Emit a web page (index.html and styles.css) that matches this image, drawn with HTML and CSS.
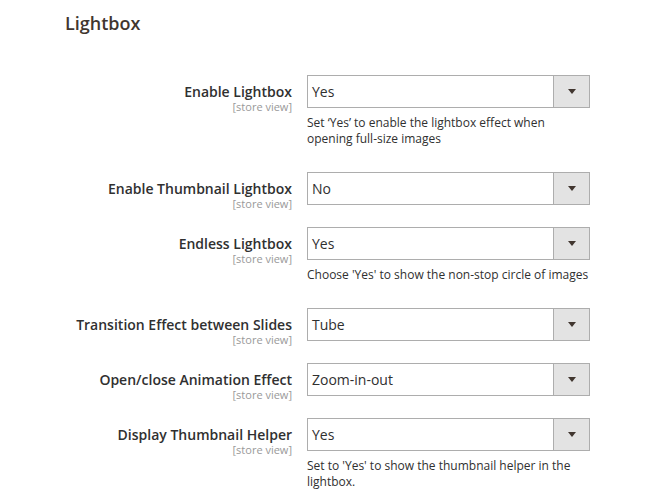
FILE: index.html
```html
<!DOCTYPE html>
<html lang="en">
<head>
<meta charset="utf-8">
<title>Lightbox</title>
<link rel="stylesheet" href="styles.css">
</head>
<body>
<section class="config">
  <h2 class="title">Lightbox</h2>
  <div class="fields">
    <div class="row">
      <div class="label"><span class="name">Enable Lightbox</span><span class="scope">[store view]</span></div>
      <div class="value">
        <div class="select"><span class="text">Yes</span><span class="arrow"><i></i></span></div>
        <p class="note">Set ‘Yes’ to enable the lightbox effect when<br>opening full-size images</p>
      </div>
    </div>
    <div class="row">
      <div class="label"><span class="name">Enable Thumbnail Lightbox</span><span class="scope">[store view]</span></div>
      <div class="value">
        <div class="select"><span class="text">No</span><span class="arrow"><i></i></span></div>
      </div>
    </div>
    <div class="row">
      <div class="label"><span class="name">Endless Lightbox</span><span class="scope">[store view]</span></div>
      <div class="value">
        <div class="select"><span class="text">Yes</span><span class="arrow"><i></i></span></div>
        <p class="note">Choose 'Yes' to show the non-stop circle of images</p>
      </div>
    </div>
    <div class="row">
      <div class="label"><span class="name">Transition Effect between Slides</span><span class="scope">[store view]</span></div>
      <div class="value">
        <div class="select"><span class="text">Tube</span><span class="arrow"><i></i></span></div>
      </div>
    </div>
    <div class="row">
      <div class="label"><span class="name">Open/close Animation Effect</span><span class="scope">[store view]</span></div>
      <div class="value">
        <div class="select"><span class="text">Zoom-in-out</span><span class="arrow"><i></i></span></div>
      </div>
    </div>
    <div class="row">
      <div class="label"><span class="name">Display Thumbnail Helper</span><span class="scope">[store view]</span></div>
      <div class="value">
        <div class="select"><span class="text">Yes</span><span class="arrow"><i></i></span></div>
        <p class="note">Set to 'Yes' to show the thumbnail helper in the<br>lightbox.</p>
      </div>
    </div>
  </div>
</section>
</body>
</html>
```
FILE: styles.css
```css
html, body {
  margin: 0;
  padding: 0;
  background: #ffffff;
}
body {
  font-family: "Open Sans", "Liberation Sans", sans-serif;
  color: #303030;
}
.config {
  padding: 11px 0 0 65px;
}
.title {
  margin: 0 0 40px 0;
  font-size: 18px;
  line-height: 24px;
  font-weight: 600;
  color: #41362f;
}
.fields {
  display: flex;
  flex-direction: column;
  gap: 22px;
}
.row {
  display: grid;
  grid-template-columns: 227px 283px;
  column-gap: 15px;
  align-items: start;
}
.label {
  display: flex;
  flex-direction: column;
  align-items: flex-end;
  text-align: right;
  padding-top: 8px;
  margin-bottom: -5px;
}
.name {
  font-size: 14px;
  line-height: 17px;
  font-weight: 600;
  color: #303030;
}
.scope {
  font-size: 11px;
  line-height: 13px;
  color: #999999;
}
.select {
  display: flex;
  height: 33px;
  box-sizing: border-box;
  border: 1px solid #adadad;
  background: #ffffff;
}
.text {
  flex: 1;
  padding: 0 0 0 4px;
  font-size: 14px;
  line-height: 31px;
  color: #303030;
}
.arrow {
  width: 35px;
  border-left: 1px solid #adadad;
  background: #e3e3e3;
  display: flex;
  align-items: center;
  justify-content: center;
}
.arrow i {
  display: block;
  width: 0;
  height: 0;
  border-left: 4px solid transparent;
  border-right: 4px solid transparent;
  border-top: 5px solid #41362f;
}
.note {
  margin: 7px 0 3px 0;
  font-size: 12px;
  line-height: 16px;
  color: #303030;
}
```
